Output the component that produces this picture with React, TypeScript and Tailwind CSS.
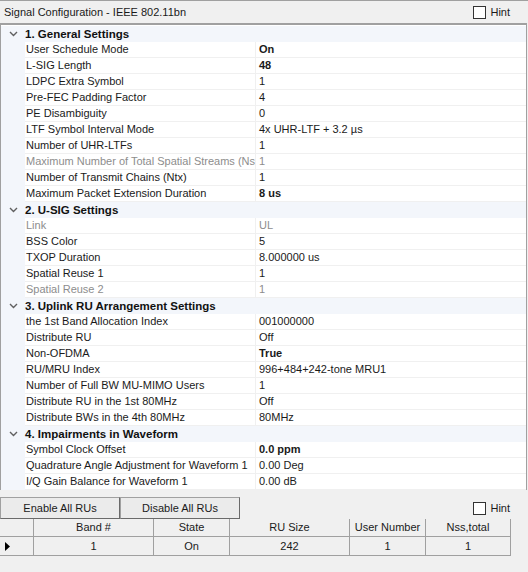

type Item = { label: string; value: string; bold?: boolean; disabled?: boolean };
type Category = { title: string; items: Item[] };

const categories: Category[] = [
  {
    title: '1. General Settings',
    items: [
      { label: 'User Schedule Mode', value: 'On', bold: true },
      { label: 'L-SIG Length', value: '48', bold: true },
      { label: 'LDPC Extra Symbol', value: '1' },
      { label: 'Pre-FEC Padding Factor', value: '4' },
      { label: 'PE Disambiguity', value: '0' },
      { label: 'LTF Symbol Interval Mode', value: '4x UHR-LTF + 3.2 µs' },
      { label: 'Number of UHR-LTFs', value: '1' },
      { label: 'Maximum Number of Total Spatial Streams (Nss)', value: '1', disabled: true },
      { label: 'Number of Transmit Chains (Ntx)', value: '1' },
      { label: 'Maximum Packet Extension Duration', value: '8 us', bold: true },
    ],
  },
  {
    title: '2. U-SIG Settings',
    items: [
      { label: 'Link', value: 'UL', disabled: true },
      { label: 'BSS Color', value: '5' },
      { label: 'TXOP Duration', value: '8.000000 us' },
      { label: 'Spatial Reuse 1', value: '1' },
      { label: 'Spatial Reuse 2', value: '1', disabled: true },
    ],
  },
  {
    title: '3. Uplink RU Arrangement Settings',
    items: [
      { label: 'the 1st Band Allocation Index', value: '001000000' },
      { label: 'Distribute RU', value: 'Off' },
      { label: 'Non-OFDMA', value: 'True', bold: true },
      { label: 'RU/MRU Index', value: '996+484+242-tone MRU1' },
      { label: 'Number of Full BW MU-MIMO Users', value: '1' },
      { label: 'Distribute RU in the 1st 80MHz', value: 'Off' },
      { label: 'Distribute BWs in the 4th 80MHz', value: '80MHz' },
    ],
  },
  {
    title: '4. Impairments in Waveform',
    items: [
      { label: 'Symbol Clock Offset', value: '0.0 ppm', bold: true },
      { label: 'Quadrature Angle Adjustment for Waveform 1', value: '0.00 Deg' },
      { label: 'I/Q Gain Balance for Waveform 1', value: '0.00 dB' },
    ],
  },
];

function HintBox() {
  return (
    <label className="flex items-center gap-[4px] text-[11px] text-[#1a1a1a]">
      <span className="h-[13px] w-[13px] border border-[#333] bg-white" />
      Hint
    </label>
  );
}

function Chevron() {
  return (
    <svg width="9" height="6" viewBox="0 0 9 6" className="block">
      <path d="M1 1 L4.5 4.5 L8 1" fill="none" stroke="#606060" strokeWidth="1.4" />
    </svg>
  );
}

function CategoryRow({ title }: { title: string }) {
  return (
    <div className="flex h-4 items-center bg-[#f3f6fb]">
      <div className="flex w-[24px] shrink-0 justify-center pl-[1px]">
        <Chevron />
      </div>
      <span className="font-bold text-[11.5px] leading-4 text-[#111]">{title}</span>
    </div>
  );
}

function ItemRow({ item }: { item: Item }) {
  const color = item.disabled ? 'text-[#8d8d8d]' : 'text-[#1a1a1a]';
  return (
    <div className="flex h-4">
      <div className="w-[24px] shrink-0 bg-[#f3f6fb]" />
      <div
        className={`w-[231px] shrink-0 overflow-hidden whitespace-nowrap border-b border-r border-[#f0f0f0] bg-white pl-[1px] text-[11px] leading-[15px] ${color}`}
      >
        {item.label}
      </div>
      <div
        className={`flex-1 overflow-hidden whitespace-nowrap border-b border-[#f0f0f0] bg-white pl-[3px] text-[11px] leading-[15px] ${color} ${item.bold ? 'font-bold text-[11.5px]' : ''}`}
      >
        {item.value}
      </div>
    </div>
  );
}

const columns = ['', 'Band #', 'State', 'RU Size', 'User Number', 'Nss,total'];
const rowValues = ['', '1', 'On', '242', '1', '1'];

export default function App() {
  return (
    <div
      className="flex h-[572px] w-[528px] flex-col overflow-hidden bg-[#f0f0f0]"
      style={{ fontFamily: '"Liberation Sans", Arial, sans-serif' }}
    >
      <div className="flex h-[23px] shrink-0 items-center justify-between border-t border-[#a0a0a0] pl-[4px] pr-[18px]">
        <span className="text-[11px] text-[#1a1a1a]">Signal Configuration - IEEE 802.11bn</span>
        <HintBox />
      </div>

      <div className="mr-[1px] flex h-[467px] shrink-0 flex-col border border-t-2 border-[#a0a0a0] bg-white">
        <div className="flex flex-col pt-[1px]">
          {categories.map((cat) => (
            <div key={cat.title}>
              <CategoryRow title={cat.title} />
              {cat.items.map((item) => (
                <ItemRow key={item.label} item={item} />
              ))}
            </div>
          ))}
        </div>
      </div>

      <div className="mt-[7px] flex h-[22px] shrink-0 items-center justify-between pr-[18px]">
        <div className="flex h-full">
          <button className="h-full w-[120px] border border-[#a0a0a0] border-b-[#6a6a6a] border-r-[#6a6a6a] bg-[#ebebeb] text-[11px] text-[#1a1a1a]">
            Enable All RUs
          </button>
          <button className="h-full w-[120px] border border-[#a0a0a0] border-b-[#6a6a6a] border-r-[#6a6a6a] bg-[#ebebeb] text-[11px] text-[#1a1a1a]">
            Disable All RUs
          </button>
        </div>
        <HintBox />
      </div>

      <div className="grid w-[511px] grid-cols-[34px_120px_76px_120px_76px_85px]">
        {columns.map((c, i) => (
          <div
            key={`h${i}`}
            className="flex h-[18px] items-center justify-center border-r border-b border-[#a0a0a0] text-[11px] text-[#1a1a1a]"
          >
            {c}
          </div>
        ))}
        {rowValues.map((v, i) => (
          <div
            key={`r${i}`}
            className="flex h-[19px] items-center justify-center border-r border-b border-[#a0a0a0] text-[11px] text-[#1a1a1a]"
          >
            {i === 0 ? (
              <div className="mr-auto ml-[5px]">
                <svg width="5" height="9" viewBox="0 0 5 9">
                  <path d="M0 0 L5 4.5 L0 9 Z" fill="#000" />
                </svg>
              </div>
            ) : (
              v
            )}
          </div>
        ))}
      </div>
    </div>
  );
}
